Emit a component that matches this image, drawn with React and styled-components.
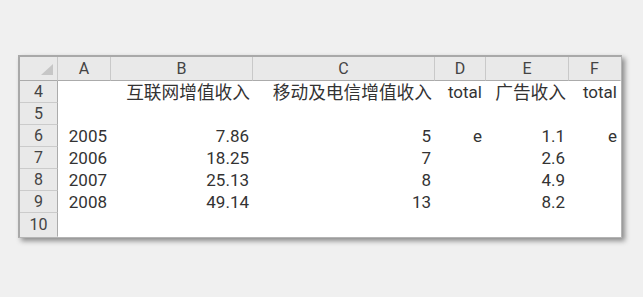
import React from "react";
import styled, { createGlobalStyle } from "styled-components";

const GlobalStyle = createGlobalStyle`
  html, body {
    margin: 0;
    padding: 0;
    background: #f0f0f0;
  }
  body {
    font-family: Roboto, "Noto Sans CJK SC", "Liberation Sans", sans-serif;
  }
`;

const Page = styled.div`
  width: 643px;
  height: 297px;
  padding: 55px 0 0 18px;
  box-sizing: border-box;
  background: #f0f0f0;
`;

const Sheet = styled.div`
  display: grid;
  grid-template-columns: 38px 53px 142px 182px 51px 83px 52px;
  grid-template-rows: 24px repeat(6, 22px) 24px;
  width: max-content;
  background: #ffffff;
  border-top: 2px solid #a9a9a9;
  border-left: 2px solid #a9a9a9;
  border-bottom: 1px solid #b4b4b4;
  border-right: 1px solid #b4b4b4;
  box-shadow: 3px 3px 5px rgba(0, 0, 0, 0.42);
`;

const Corner = styled.div`
  display: flex;
  justify-content: flex-end;
  align-items: flex-end;
  padding: 0 4px 5px 0;
  box-sizing: border-box;
  background: #e9e9e9;
  border-right: 1px solid #c9c9c9;
  border-bottom: 1px solid #ababab;
`;

const ColHead = styled.div`
  display: flex;
  align-items: center;
  justify-content: center;
  box-sizing: border-box;
  background: #e9e9e9;
  border-right: 1px solid ${(p) => (p.last ? "#e9e9e9" : "#c9c9c9")};
  border-bottom: 1px solid #ababab;
  color: #444444;
  font-size: 16px;
  line-height: 1;
  padding-top: 1px;
`;

const RowHead = styled.div`
  display: flex;
  align-items: center;
  justify-content: center;
  box-sizing: border-box;
  background: #e9e9e9;
  border-right: 1px solid #ababab;
  border-bottom: 1px solid ${(p) => (p.last ? "#e9e9e9" : "#cbcbcb")};
  color: #444444;
  font-size: 16px;
  line-height: 1;
`;

const Cell = styled.div`
  display: flex;
  align-items: center;
  justify-content: flex-end;
  padding-right: ${(p) => (p.cjk ? "3px" : "4px")};
  box-sizing: border-box;
  white-space: nowrap;
  color: #333333;
  font-size: ${(p) => (p.cjk ? "17.7px" : "17px")};
  line-height: 1;
  padding-top: ${(p) => (p.cjk ? "4px" : "0")};
`;

const columns = ["A", "B", "C", "D", "E", "F"];

const rows = [
  { n: 4, cells: ["", "互联网增值收入", "移动及电信增值收入", "total", "广告收入", "total"] },
  { n: 5, cells: ["", "", "", "", "", ""] },
  { n: 6, cells: ["2005", "7.86", "5", "e", "1.1", "e"] },
  { n: 7, cells: ["2006", "18.25", "7", "", "2.6", ""] },
  { n: 8, cells: ["2007", "25.13", "8", "", "4.9", ""] },
  { n: 9, cells: ["2008", "49.14", "13", "", "8.2", ""] },
  { n: 10, cells: ["", "", "", "", "", ""] },
];

const hasCjk = (s) => /[\u4e00-\u9fff]/.test(s);

const CornerMark = () => (
  <svg width="12" height="11" viewBox="0 0 12 11">
    <polygon points="12,0 12,11 0,11" fill="#c6c6c6" />
  </svg>
);

export default function App() {
  return (
    <Page>
      <GlobalStyle />
      <Sheet>
        <Corner>
          <CornerMark />
        </Corner>
        {columns.map((c, i) => (
          <ColHead key={c} last={i === columns.length - 1}>
            {c}
          </ColHead>
        ))}
        {rows.map((r, ri) => (
          <React.Fragment key={r.n}>
            <RowHead last={ri === rows.length - 1}>{r.n}</RowHead>
            {r.cells.map((v, ci) => (
              <Cell key={ci} cjk={hasCjk(v)}>
                {v}
              </Cell>
            ))}
          </React.Fragment>
        ))}
      </Sheet>
    </Page>
  );
}
